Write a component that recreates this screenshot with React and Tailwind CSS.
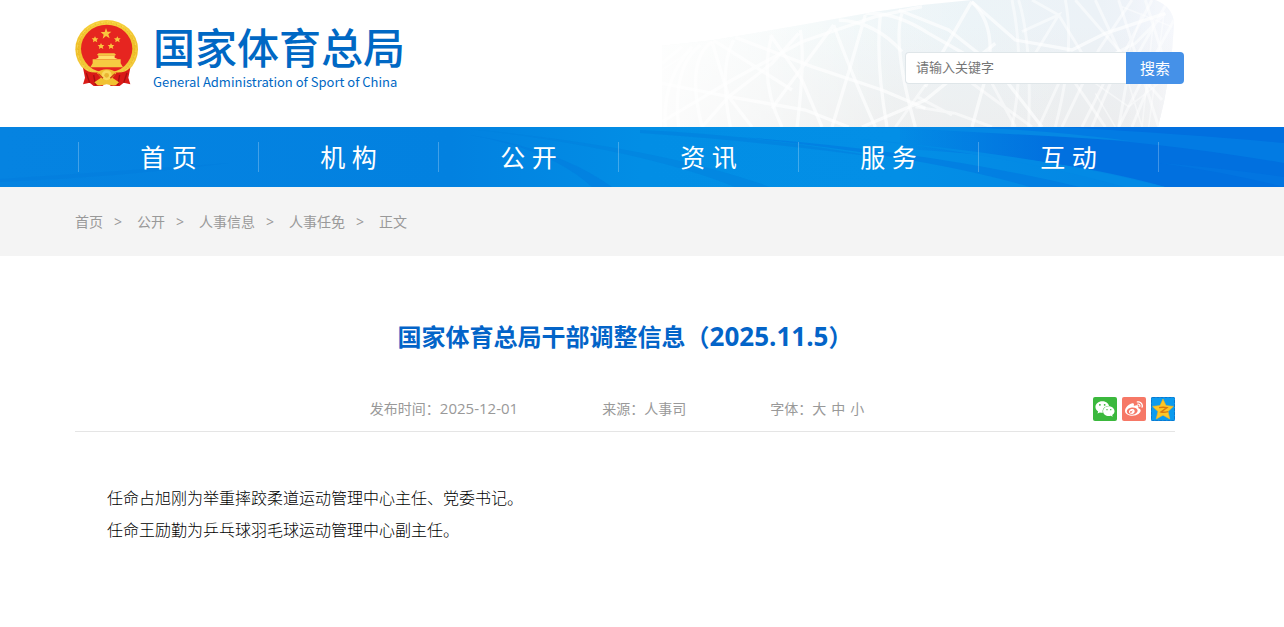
import { useState } from "react";
import { FaWeixin, FaWeibo } from "react-icons/fa";

const navItems = ["首 页", "机 构", "公 开", "资 讯", "服 务", "互 动"];
const crumbs = ["首页", "公开", "人事信息", "人事任免", "正文"];
const paragraphs = [
  "任命占旭刚为举重摔跤柔道运动管理中心主任、党委书记。",
  "任命王励勤为乒乓球羽毛球运动管理中心副主任。",
];

const Emblem = () => (
  <svg viewBox="14 12 189 207" className="h-[69px] w-[63px] shrink-0" aria-hidden="true">
    <defs>
      <linearGradient id="ring" x1="0" y1="0" x2="0" y2="1">
        <stop offset="0" stopColor="#f6d13c" />
        <stop offset="0.5" stopColor="#efbf28" />
        <stop offset="1" stopColor="#f4cf45" />
      </linearGradient>
    </defs>
    <ellipse cx="109" cy="103" rx="94" ry="88" fill="url(#ring)" />
    <ellipse cx="109" cy="103" rx="85" ry="80" fill="none" stroke="#d79a18" strokeWidth="4" strokeDasharray="3 5" opacity="0.3" />
    <ellipse cx="109" cy="103" rx="88" ry="82" fill="none" stroke="#ffe471" strokeWidth="3" strokeDasharray="9 7" opacity="0.5" />
    <ellipse cx="109" cy="101" rx="77" ry="72" fill="#e62520" />
    <path d="M107 39 l4 11 12 0 -9 8 4 12 -11 -7 -10 8 3 -12 -9 -8 12 0z" fill="#f9c63e" />
    <path d="M74 64 l3 6 7 0 -5 5 2 7 -7 -4 -6 4 1 -7 -5 -5 7 0z" fill="#f9c63e" />
    <path d="M141 64 l3 6 7 0 -5 5 2 7 -7 -4 -6 4 1 -7 -5 -5 7 0z" fill="#f9c63e" />
    <path d="M92 84 l3 6 7 0 -5 5 2 7 -7 -4 -6 4 1 -7 -5 -5 7 0z" fill="#f9c63e" />
    <path d="M122 84 l3 6 7 0 -5 5 2 7 -7 -4 -6 4 1 -7 -5 -5 7 0z" fill="#f9c63e" />
    {/* gate */}
    <path d="M80 119 L85 115 H132 L137 119 L133 122 H84 Z" fill="#f5c842" />
    <path d="M84 122 H133 V128 L142 132 H76 L84 128 Z" fill="#ffdf6a" />
    <path d="M67 133 H151 V145 L158 157 H60 L67 145 Z" fill="#f6cb42" />
    {/* ribbons */}
    <path d="M38 158 Q56 176 84 172 L96 186 L84 200 L100 213 L70 213 L58 203 L38 208 L44 188 Z" fill="#d91a17" />
    <path d="M180 158 Q162 176 134 172 L122 186 L134 200 L118 213 L148 213 L160 203 L180 208 L174 188 Z" fill="#d91a17" />
    <path d="M48 174 L58 203 M170 174 L160 203 M70 180 L76 211 M148 180 L142 211" stroke="#a80f10" strokeWidth="4" fill="none" />
    <path d="M80 174 Q90 163 109 163 Q128 163 138 174 L126 188 L146 202 L136 211 Q120 212 109 208 Q98 212 82 211 L72 202 L92 188 Z" fill="#f1c232" />
    <circle cx="109" cy="181" r="15" fill="#f9d95c" />
    <circle cx="109" cy="181" r="7" fill="#e9b432" />
    <path d="M84 176 L98 190 M134 176 L120 190" stroke="#cc3a1a" strokeWidth="4" fill="none" />
  </svg>
);

const StadiumPattern = () => (
  <svg
    viewBox="0 0 1542 381"
    className="pointer-events-none absolute bottom-0 left-[662px] h-[127px] w-[514px]"
    aria-hidden="true"
  >
    <defs>
      <linearGradient id="shell" x1="0" y1="0" x2="1" y2="0">
        <stop offset="0" stopColor="#f9fcfb" />
        <stop offset="0.3" stopColor="#f0f7f8" />
        <stop offset="0.6" stopColor="#ebf3f7" />
        <stop offset="0.85" stopColor="#ecf2f7" />
        <stop offset="1" stopColor="#f1f4fb" />
      </linearGradient>
      <linearGradient id="shade" x1="0" y1="0" x2="0" y2="1">
        <stop offset="0.2" stopColor="#ececec" stopOpacity="0" />
        <stop offset="1" stopColor="#ececec" stopOpacity="0.8" />
      </linearGradient>
      <linearGradient id="fade" x1="0" y1="0" x2="1" y2="0">
        <stop offset="0" stopColor="#fff" stopOpacity="0.8" />
        <stop offset="0.45" stopColor="#fff" stopOpacity="0.1" />
        <stop offset="0.9" stopColor="#fff" stopOpacity="0" />
        <stop offset="1" stopColor="#fff" stopOpacity="0.4" />
      </linearGradient>
      <clipPath id="hull">
        <path d="M0 137 L150 121 L400 78 L640 35 L780 15 L930 0 H1480 Q1536 22 1536 75 Q1528 230 1488 381 H0 Z" />
      </clipPath>
    </defs>
    <g clipPath="url(#hull)">
      <rect width="1542" height="381" fill="url(#shell)" />
      <rect width="1542" height="381" fill="url(#shade)" />
      <g fill="none" stroke="#fff" strokeOpacity="0.65" strokeWidth="10">
        <path d="M0 190 L60 140 M10 381 Q0 240 90 140 M50 381 Q30 200 115 135 M120 381 Q70 180 150 125" />
        <path d="M150 125 L200 290 L270 381 M0 250 L200 290 L430 330 L560 381" />
        <path d="M155 121 L390 270 M0 365 L210 240 L420 125 L640 50 L780 20" />
        <path d="M205 381 Q170 200 215 120 M220 112 L450 200 L660 270 L790 325" />
        <path d="M120 381 L200 290 L330 190 L410 100" />
        <path d="M325 105 L420 240 L480 381 M330 105 Q290 240 360 381" />
        <path d="M415 90 Q430 180 405 381 M515 75 L330 325 M515 75 Q560 200 640 381" />
        <path d="M610 45 L565 200 L510 381 M530 60 Q640 65 720 155" />
        <path d="M610 40 Q700 35 800 100 L940 180 M655 45 Q640 180 675 381" />
        <path d="M720 40 Q690 130 760 381 M600 381 L790 300 L1000 130" />
        <path d="M710 30 L860 90 L1000 200 L1140 381" />
        <path d="M929 5 L840 160 L790 260 M929 5 Q1000 70 980 200 L930 381" />
        <path d="M929 5 L1060 120 L1230 150 L1330 100 L1510 40" />
      </g>
      <g fill="none" stroke="#fff" strokeOpacity="0.5" strokeWidth="9">
        <path d="M1050 0 Q1090 190 1050 381 M1070 0 Q1110 130 1100 381" />
        <path d="M1080 95 L1190 45 L1120 160 M1110 0 L1190 45 L1260 160" />
        <path d="M1210 0 Q1240 150 1180 381 M1240 0 L1370 150 L1500 300" />
        <path d="M1300 0 L1370 150 L1320 260 L1260 381 M1410 0 L1310 150 L1200 381" />
        <path d="M1370 0 L1420 160 L1490 381 M1470 0 L1370 190 L1290 381" />
        <path d="M1510 40 L1420 130 L1340 170 M1520 0 L1400 210 L1370 381" />
        <path d="M1450 0 L1500 160 L1410 381 M1536 60 L1450 220 L1370 381" />
        <path d="M760 320 L880 340 L990 381 M790 255 L700 381 M765 290 L870 345" />
        <path d="M930 250 L1110 381 M990 250 L1060 381 M1190 250 L1130 381 M1240 250 L1330 381" />
      </g>
      <g fill="none" stroke="#fff" strokeOpacity="0.45" strokeWidth="5">
        <path d="M1400 250 L1440 381 M1475 60 L1440 381 M1505 50 L1460 381 M1300 250 L1400 320 L1490 250" />
        <path d="M1300 280 L1360 381 M1380 20 L1530 80 M1440 40 L1400 160 M0 210 L90 150" />
      </g>
      <rect width="1542" height="381" fill="url(#fade)" />
    </g>
  </svg>
);

const NavWaves = () => (
  <svg
    viewBox="0 0 1284 60"
    preserveAspectRatio="none"
    className="absolute inset-0 h-full w-full"
    aria-hidden="true"
  >
    <defs>
      <linearGradient id="bar" x1="0" y1="0" x2="1" y2="0">
        <stop offset="0" stopColor="#0583e1" />
        <stop offset="0.35" stopColor="#0281e0" />
        <stop offset="0.5" stopColor="#028ee5" />
        <stop offset="0.7" stopColor="#038fe6" />
        <stop offset="1" stopColor="#0380e2" />
      </linearGradient>
      <linearGradient id="deep" x1="0" y1="0" x2="1" y2="0">
        <stop offset="0" stopColor="#0278e0" stopOpacity="0.2" />
        <stop offset="0.4" stopColor="#0170df" />
        <stop offset="1" stopColor="#0170df" />
      </linearGradient>
    </defs>
    <rect width="1284" height="60" fill="url(#bar)" />
    <path d="M470 8 Q560 22 612 60 H592 Q550 22 470 8Z" fill="#0179dd" opacity="0.5" />
    <path d="M470 2 Q660 20 770 60 H735 Q640 22 470 2Z" fill="#0180de" opacity="0.5" />
    <path d="M640 3 Q760 8 890 32 Q760 14 640 6Z" fill="#0172d8" opacity="0.3" />
    <path d="M0 52 Q120 44 230 36 Q120 50 0 55Z" fill="#0174d8" opacity="0.2" />
    <path d="M740 10 Q930 24 1080 60 H1030 Q930 30 740 10Z" fill="#0178e0" opacity="0.6" />
    <path d="M900 0 H1284 V60 H1165 Q1060 30 900 22 Z" fill="url(#deep)" />
    <path d="M870 0 H1060 Q1200 8 1284 16 V36 Q1100 4 870 0Z" fill="#027be3" />
    <path d="M870 0 H960 Q1050 3 1130 14 Q1000 6 870 0Z" fill="#0588e4" />
    <path d="M860 12 Q1040 28 1165 60 H1125 Q1010 28 860 12Z" fill="#038ae5" />
    <path d="M1160 36 Q1230 42 1284 50 V60 Q1230 46 1160 36Z" fill="#0275e1" />
  </svg>
);

const QzoneStar = () => (
  <svg viewBox="0 0 24 24" className="size-6" aria-hidden="true">
    <rect width="24" height="24" rx="1.5" fill="#0c9bee" />
    <rect x="0.5" y="0.5" width="23" height="23" rx="1" fill="none" stroke="#0a78d0" strokeDasharray="3 1" />
    <path d="M12 2 L15 8.6 L22.4 9.4 L17 14.4 L18.8 22 L12 18.2 L5.2 22 L7 14.4 L1.6 9.4 L9 8.6 Z" fill="#fdc726" stroke="#f9b31b" strokeWidth="0.6" strokeLinejoin="round" />
    <path d="M8 10.6 Q12 9.8 16 10.6 L10 15 Q13 15.8 17 14.6" fill="none" stroke="#d9790f" strokeWidth="1.4" />
  </svg>
);

const Header = () => {
  const [keyword, setKeyword] = useState("");

  return (
    <header className="relative flex h-[127px] items-start justify-between overflow-hidden bg-white pl-[75px] pr-[100px]">
      <StadiumPattern />
      <a href="#" className="relative flex items-start gap-[15px] pt-[19px] text-[#0068c4]">
        <Emblem />
        <span className="flex flex-col pt-2">
          <span className="font-['Liberation_Sans','Noto_Sans_CJK_SC',sans-serif] text-[42px] font-medium leading-[46px]">
            国家体育总局
          </span>
          <span className="font-['Noto_Sans_CJK_SC',sans-serif] text-[13px] leading-[18px]">
            General Administration of Sport of China
          </span>
        </span>
      </a>
      <form className="relative mt-[52px] flex h-8" onSubmit={(e) => e.preventDefault()}>
        <input
          type="text"
          aria-label="请输入关键字"
          placeholder="请输入关键字"
          value={keyword}
          onChange={(e) => setKeyword(e.target.value)}
          className="w-[221px] rounded-l border border-r-0 border-[#dfe6e9] bg-white px-[10px] text-[13px] text-[#333] outline-none placeholder:text-[#757575]"
        />
        <button type="submit" className="w-[58px] rounded-r bg-[#4591e8] text-[15px] text-white">
          搜索
        </button>
      </form>
    </header>
  );
};

const Navbar = () => (
  <nav className="relative h-[60px] bg-[#0283e1]">
    <NavWaves />
    <ul className="relative flex h-full items-center pl-[78px]">
      {navItems.map((item) => (
        <li key={item} className="h-[30px] w-[180px] border-l border-white/25 last:w-[181px] last:border-r">
          <a href="#" className="block text-center text-[25px] leading-[30px] text-white">
            {item}
          </a>
        </li>
      ))}
    </ul>
  </nav>
);

const Breadcrumb = () => (
  <div className="flex h-[69px] items-center bg-[#f4f4f4] pl-[75px] text-[14px] text-[#999]">
    {crumbs.map((crumb, i) => (
      <span key={crumb} className="flex items-center">
        {i > 0 && <span className="pl-[11px] pr-[15px]">&gt;</span>}
        <a href="#">{crumb}</a>
      </span>
    ))}
  </div>
);

const Article = () => (
  <main className="pl-[75px] pr-[109px]">
    <h1 className="pt-[62px] text-center text-[24px] font-bold leading-9 text-[#0364c8]">
      国家体育总局干部调整信息（<span className="text-[26px]">2025.11.5</span>）
    </h1>
    <div className="mt-[31px] grid h-[46px] grid-cols-[1fr_auto_1fr] items-center border-b border-[#e5e5e5] text-[14px] text-[#999]">
      <div className="col-start-2 flex items-center gap-[84px] pr-4">
        <span>
          发布时间：<span className="text-[15px]">2025-12-01</span>
        </span>
        <span>来源：人事司</span>
        <span className="flex items-center">
          字体：
          <span className="flex gap-[5px]">
            <button type="button">大</button>
            <button type="button">中</button>
            <button type="button">小</button>
          </span>
        </span>
      </div>
      <div className="flex gap-[5px] justify-self-end">
        <a href="#" aria-label="微信" className="flex size-6 items-center justify-center rounded-xs bg-[#3bb83d] text-white">
          <FaWeixin size={20} />
        </a>
        <a href="#" aria-label="微博" className="flex size-6 items-center justify-center rounded-xs bg-[#f67866] text-white">
          <FaWeibo size={18} />
        </a>
        <a href="#" aria-label="QQ空间">
          <QzoneStar />
        </a>
      </div>
    </div>
    <div className="px-8 pt-[49px] font-['Noto_Sans_CJK_SC',sans-serif] text-[16px] font-light leading-8 text-black">
      {paragraphs.map((text) => (
        <p key={text}>{text}</p>
      ))}
    </div>
  </main>
);

const App = () => {
  return (
    <div className="min-h-screen bg-white font-['Open_Sans','Noto_Sans_CJK_SC',sans-serif]">
      <Header />
      <Navbar />
      <Breadcrumb />
      <Article />
    </div>
  );
};

export default App;
